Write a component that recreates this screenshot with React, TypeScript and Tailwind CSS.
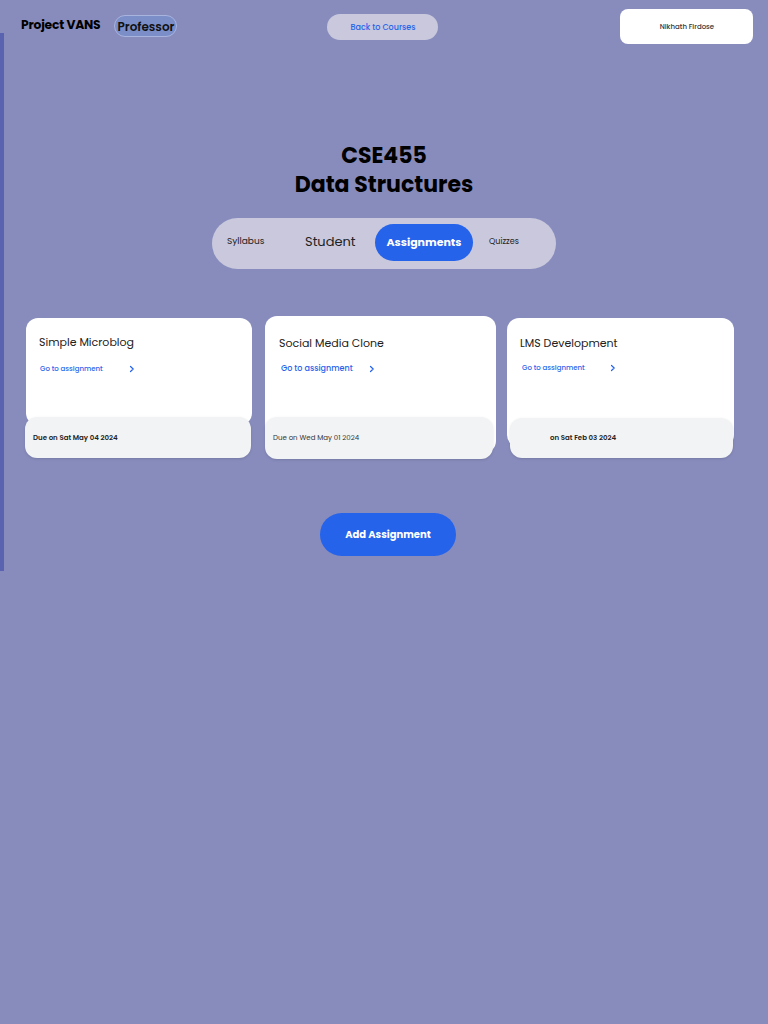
import React from "react";

const font = { fontFamily: "Poppins, Inter, 'Noto Sans', sans-serif" };

function Chevron() {
  return (
    <svg width="6" height="8" viewBox="0 0 6 8" fill="none">
      <path d="M1.5 1.5 L4.2 4 L1.5 6.5" stroke="#2563eb" strokeWidth="1.2" strokeLinecap="round" strokeLinejoin="round" />
    </svg>
  );
}

export default function App() {
  return (
    <div className="relative min-h-[1024px] w-[768px] bg-[#878cbd] text-black" style={font}>
      <div className="absolute left-0 top-[33px] h-[538px] w-[4px] bg-[#5a63b0]" />

      {/* Header */}
      <div className="flex items-start pt-[9px]">
        <div className="ml-[21px] mt-[9px] text-[12.3px] font-bold leading-[14px] tracking-[-0.2px]">Project VANS</div>
        <div className="ml-[14px] mt-[6px] flex h-[22px] w-[63px] items-center justify-center rounded-full border border-[#a9b4de] bg-[#7b8ec8] pt-[1px] text-[12px] font-semibold text-[#111]">
          Professor
        </div>
        <div className="ml-[150px] mt-[5px] flex h-[26px] w-[111px] items-center justify-center rounded-full bg-[#c9c8dd] pt-[1px] text-[8px] font-medium text-[#2563eb]">
          Back to Courses
        </div>
        <div className="ml-[182px] flex h-[35px] w-[133px] items-center justify-center rounded-lg bg-white pt-[1px] text-[7px] font-medium text-[#333]">
          Nikhath Firdose
        </div>
      </div>

      {/* Title */}
      <div className="mt-[97px] flex flex-col items-center text-[22px] font-bold leading-[29px]">
        <div>CSE455</div>
        <div>Data Structures</div>
      </div>

      {/* Tabs */}
      <div className="mt-[19px] flex justify-center">
        <div className="flex h-[51px] w-[344px] items-center rounded-full bg-[#c9c8dd] pb-[3px] pl-[15px]">
          <div className="w-[78px] text-[9px] text-[#222]">Syllabus</div>
          <div className="w-[70px] text-[13px] text-[#222]">Student</div>
          <div className="flex h-[37px] w-[98px] items-center justify-center rounded-full bg-[#2563eb] text-[11px] font-bold text-white">
            Assignments
          </div>
          <div className="ml-[16px] text-[8px] text-[#222]">Quizzes</div>
        </div>
      </div>

      {/* Cards */}
      <div className="mt-[47px] flex items-start">
        {/* Card 1 */}
        <div className="ml-[25px] mt-[2px] w-[227px]">
          <div className="ml-[1px] h-[107px] w-[226px] rounded-xl bg-white pl-[13px] pt-[16px]">
            <div className="text-[11px] leading-[16px] text-[#222]">Simple Microblog</div>
            <div className="mt-[14px] flex items-center">
              <span className="ml-[1px] w-[89px] text-[7px] font-medium text-[#2563eb]">Go to assignment</span>
              <Chevron />
            </div>
          </div>
          <div className="-mt-[8px] flex h-[41px] w-[226px] items-center rounded-xl bg-[#f2f3f5] pl-[8px] pt-[1px] text-[7px] font-semibold text-[#222] shadow-sm">
            Due on Sat May 04 2024
          </div>
        </div>

        {/* Card 2 */}
        <div className="ml-[13px] w-[231px]">
          <div className="h-[137px] w-[231px] rounded-xl bg-white pl-[14px] pt-[19px]">
            <div className="text-[11px] leading-[16px] text-[#222]">Social Media Clone</div>
            <div className="mt-[12px] flex items-center">
              <span className="ml-[2px] w-[88px] text-[8px] font-medium text-[#2563eb]">Go to assignment</span>
              <Chevron />
            </div>
          </div>
          <div className="-mt-[36px] flex h-[42px] w-[228px] items-center rounded-xl bg-[#f2f3f5] pl-[8px] pt-[1px] text-[7px] text-[#333] shadow-sm">
            Due on Wed May 01 2024
          </div>
        </div>

        {/* Card 3 */}
        <div className="ml-[11px] mt-[2px] w-[227px]">
          <div className="h-[129px] w-[227px] rounded-xl bg-white pl-[13px] pt-[17px]">
            <div className="text-[11px] leading-[16px] text-[#222]">LMS Development</div>
            <div className="mt-[12px] flex items-center">
              <span className="ml-[2px] w-[88px] text-[7px] font-medium text-[#2563eb]">Go to assignment</span>
              <Chevron />
            </div>
          </div>
          <div className="-mt-[29px] ml-[3px] flex h-[40px] w-[223px] items-center rounded-xl bg-[#f2f3f5] pl-[40px] pt-[1px] text-[7px] font-semibold text-[#222] shadow-sm">
            on Sat Feb 03 2024
          </div>
        </div>
      </div>

      {/* Add Assignment */}
      <div className="mt-[54px] flex">
        <div className="ml-[320px] flex h-[43px] w-[136px] items-center justify-center rounded-full bg-[#2563eb] text-[10px] font-bold text-white">
          Add Assignment
        </div>
      </div>
    </div>
  );
}
